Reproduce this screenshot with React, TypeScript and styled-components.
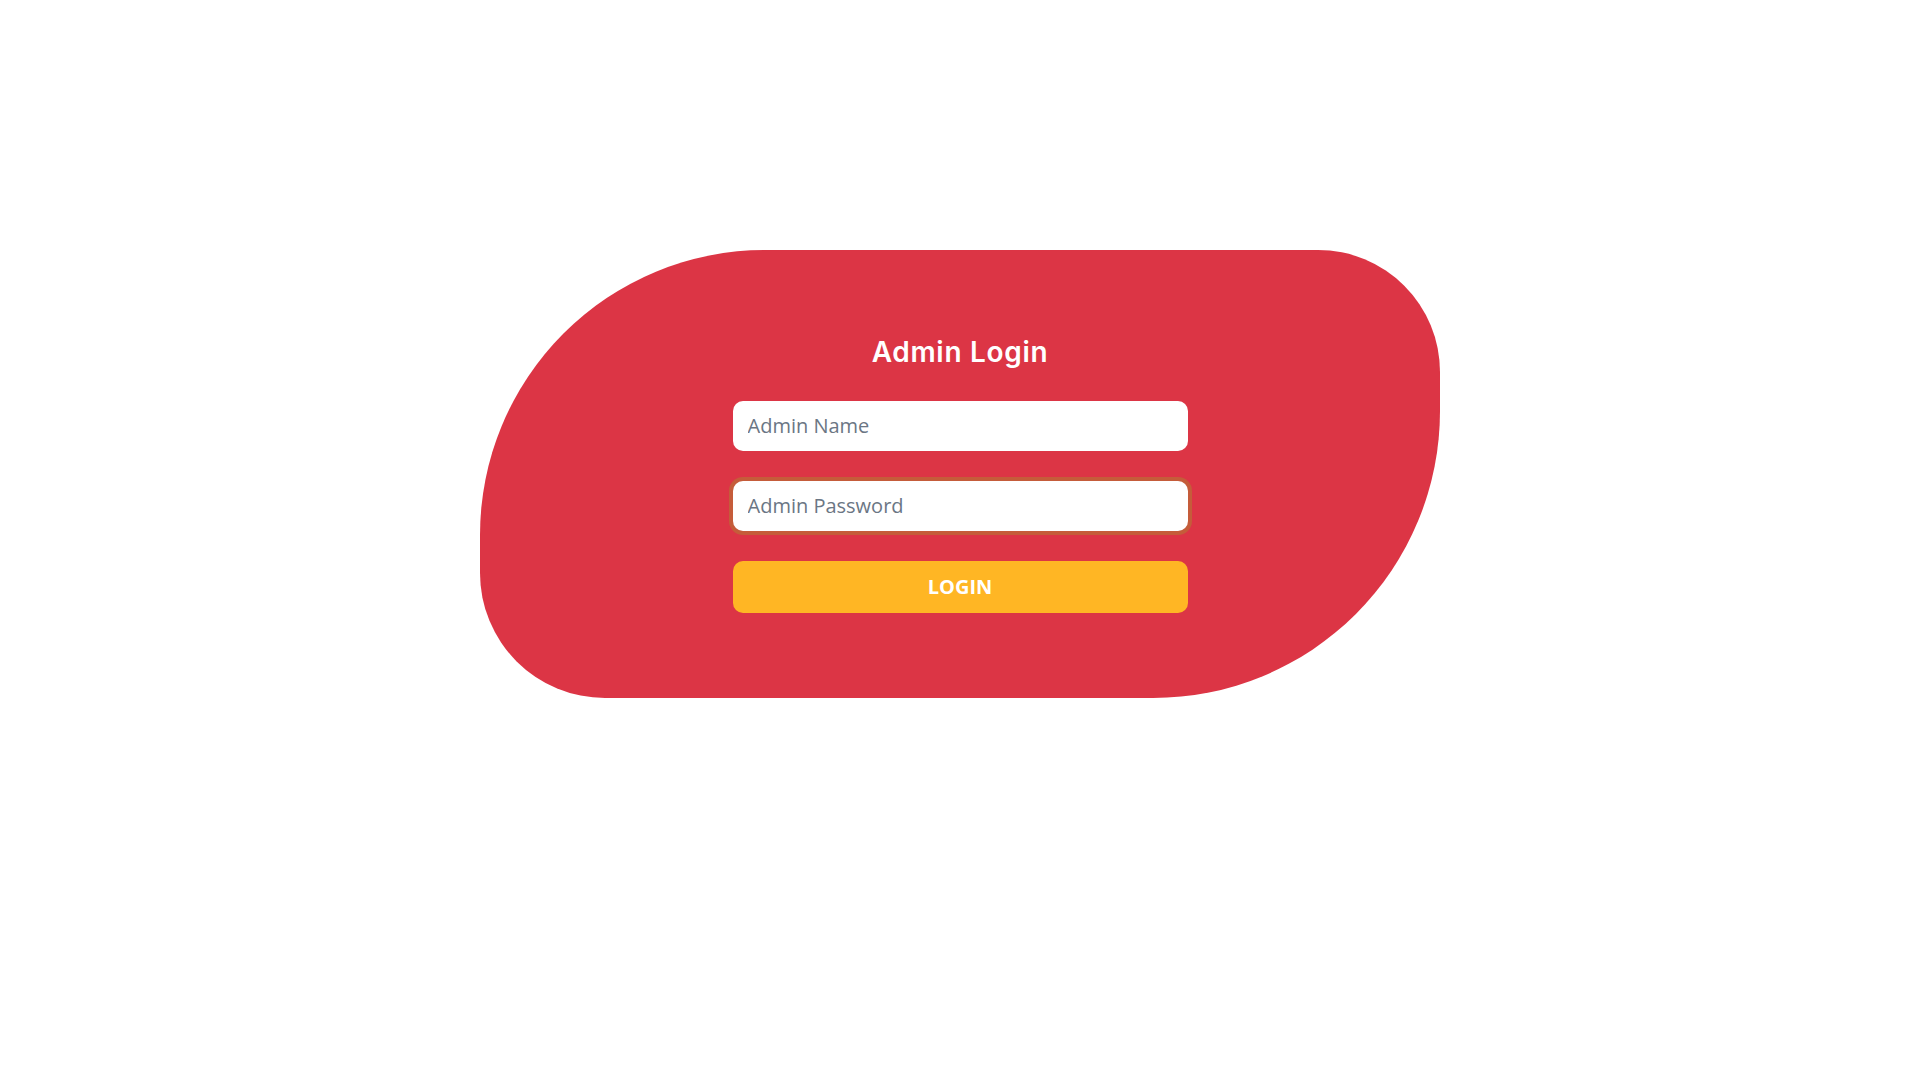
import styled, {createGlobalStyle} from 'styled-components';

const GlobalStyle = createGlobalStyle`
    * {
        box-sizing: border-box;
    }
    body {
        margin: 0;
        background: #ffffff;
        font-family: 'Open Sans', 'Liberation Sans', sans-serif;
    }
`;

const Page = styled.div`
    min-height: 1080px;
    padding-top: 250px;
`;

const Card = styled.div`
    width: 960px;
    height: 448px;
    margin: 0 auto;
    padding: 85px 0 85px;
    display: flex;
    flex-direction: column;
    align-items: center;
    background-color: #dc3545;
    border-radius: 285px 122px 287px 125px;
`;

const Title = styled.h3`
    margin: 0 0 32px;
    color: #ffffff;
    font-family: 'Inter', 'Lato', sans-serif;
    font-size: 28px;
    font-weight: 600;
    line-height: 34px;
    letter-spacing: 0.7px;
`;

const Form = styled.form`
    width: 455px;
    display: flex;
    flex-direction: column;
    gap: 30px;
`;

const Input = styled.input<{$focused?: boolean}>`
    height: 50px;
    width: 100%;
    padding: 0 15px 2px;
    border: none;
    border-radius: 10px;
    background: #ffffff;
    font-family: 'Open Sans', sans-serif;
    font-size: 20px;
    color: #212529;
    outline: none;
    box-shadow: ${(p) => (p.$focused ? '0 0 0 4px #c55c3a' : 'none')};

    &::placeholder {
        color: #6b7684;
    }
`;

const LoginButton = styled.button`
    height: 52px;
    width: 100%;
    padding: 0 0 2px;
    border: none;
    border-radius: 10px;
    background-color: #ffb624;
    color: #ffffff;
    font-family: 'Open Sans', sans-serif;
    font-size: 20px;
    font-weight: 700;
    cursor: pointer;
`;

function App() {
    return (
        <Page>
            <GlobalStyle />
            <Card>
                <Title>Admin Login</Title>
                <Form onSubmit={(e) => e.preventDefault()}>
                    <Input type='text' placeholder='Admin Name' />
                    <Input type='password' placeholder='Admin Password' $focused />
                    <LoginButton type='submit'>LOGIN</LoginButton>
                </Form>
            </Card>
        </Page>
    );
}

export default App;
